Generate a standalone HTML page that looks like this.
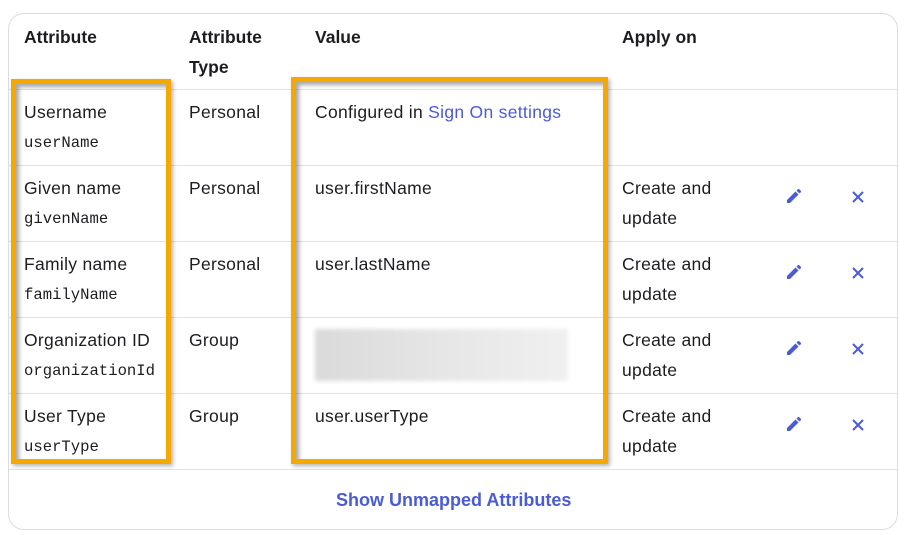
<!DOCTYPE html>
<html><head><style>
body{margin:0;width:904px;height:535px;background:#fff;font-family:"Liberation Sans",Arial,sans-serif;color:#1d1d21;position:relative;overflow:hidden}
.card{position:absolute;left:8px;top:13px;width:888px;height:515px;border:1px solid #dcdcdc;border-radius:16px}
.t{position:absolute;font-size:17.5px;letter-spacing:0.3px;white-space:nowrap}
.b{font-weight:bold;letter-spacing:0}
.m{position:absolute;font-family:"Liberation Mono",monospace;font-size:15.6px}
.line{position:absolute;left:9px;width:888px;height:1px;background:#e2e2e2}
.box{position:absolute;border:5px solid #f5a800;box-shadow:inset 3px 3px 4px rgba(0,0,0,.35),2px 2px 4px rgba(0,0,0,.3)}
.link{color:#4a5bd6}
svg{position:absolute}
</style></head><body>
<div class="card"></div>
<div class="t b" style="left:24px;top:27px">Attribute</div>
<div class="t b" style="left:189px;top:27px">Attribute</div>
<div class="t b" style="left:189px;top:57px">Type</div>
<div class="t b" style="left:315px;top:27px">Value</div>
<div class="t b" style="left:622px;top:27px">Apply on</div>
<div class="line" style="top:89px"></div>
<div class="line" style="top:165px"></div>
<div class="line" style="top:241px"></div>
<div class="line" style="top:317px"></div>
<div class="line" style="top:393px"></div>
<div class="line" style="top:469px"></div>

<div class="t" style="left:24px;top:102px">Username</div><div class="m" style="left:24px;top:134px">userName</div>
<div class="t" style="left:189px;top:102px">Personal</div>
<div class="t" style="left:315px;top:102px">Configured in <span class="link">Sign On settings</span></div>

<div class="t" style="left:24px;top:178px">Given name</div><div class="m" style="left:24px;top:210px">givenName</div>
<div class="t" style="left:189px;top:178px">Personal</div>
<div class="t" style="left:315px;top:178px">user.firstName</div>
<div class="t" style="left:622px;top:178px">Create and</div><div class="t" style="left:622px;top:208px">update</div>

<div class="t" style="left:24px;top:254px">Family name</div><div class="m" style="left:24px;top:286px">familyName</div>
<div class="t" style="left:189px;top:254px">Personal</div>
<div class="t" style="left:315px;top:254px">user.lastName</div>
<div class="t" style="left:622px;top:254px">Create and</div><div class="t" style="left:622px;top:284px">update</div>

<div class="t" style="left:24px;top:330px">Organization ID</div><div class="m" style="left:24px;top:362px">organizationId</div>
<div class="t" style="left:189px;top:330px">Group</div>
<div style="position:absolute;left:315px;top:329px;width:253px;height:52px;background:linear-gradient(90deg,#dadada,#e6e6e6 50%,#f0f0f0);filter:blur(2px)"></div>
<div class="t" style="left:622px;top:330px">Create and</div><div class="t" style="left:622px;top:360px">update</div>

<div class="t" style="left:24px;top:406px">User Type</div><div class="m" style="left:24px;top:438px">userType</div>
<div class="t" style="left:189px;top:406px">Group</div>
<div class="t" style="left:315px;top:406px">user.userType</div>
<div class="t" style="left:622px;top:406px">Create and</div><div class="t" style="left:622px;top:436px">update</div>

<svg width="904" height="535" style="left:0;top:0">
<defs><g id="p"><path d="M0 0v-3l8.5-8.5 3 3L3 0z M9.5-12.5l1.3-1.3a1 1 0 0 1 1.4 0l1.6 1.6a1 1 0 0 1 0 1.4l-1.3 1.3z" fill="#4a5bd6"/></g></defs>
<use href="#p" x="787" y="203"/><use href="#p" x="787" y="279"/><use href="#p" x="787" y="355"/><use href="#p" x="787" y="431"/>
<g stroke="#4a5bd6" stroke-width="2">
<path d="M853 192l10 10M863 192l-10 10"/>
<path d="M853 268l10 10M863 268l-10 10"/>
<path d="M853 344l10 10M863 344l-10 10"/>
<path d="M853 420l10 10M863 420l-10 10"/>
</g>
</svg>

<div class="t b link" style="left:336px;top:490px;font-size:18px">Show Unmapped Attributes</div>

<div class="box" style="left:11px;top:79px;width:150px;height:375px"></div>
<div class="box" style="left:291px;top:77px;width:307px;height:377px"></div>
</body></html>
